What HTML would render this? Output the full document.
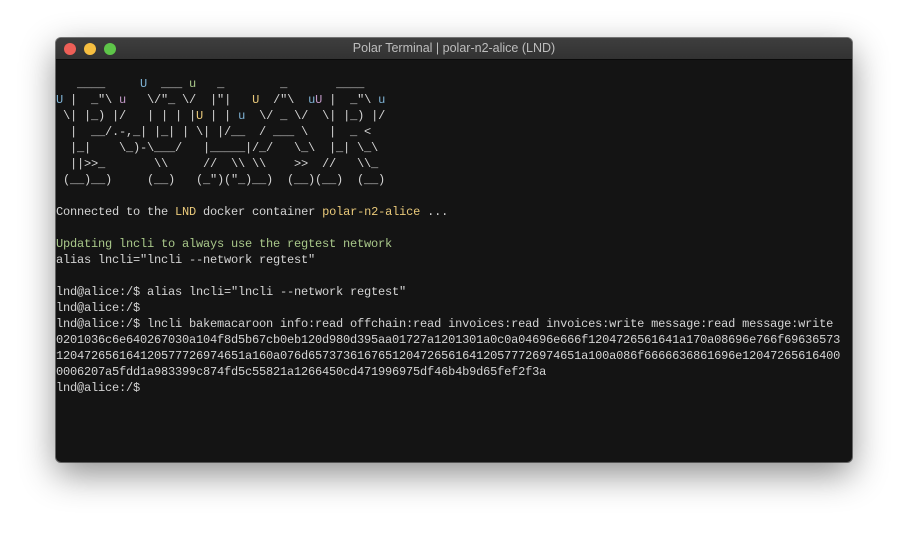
<!DOCTYPE html>
<html><head><meta charset="utf-8"><style>
html,body{margin:0;padding:0;background:#fff;width:908px;height:537px;overflow:hidden}
.win{position:absolute;left:56px;top:38px;width:796px;height:424px;background:#141414;border-radius:5px;box-shadow:0 12px 35px rgba(0,0,0,.45),0 0 0 1px rgba(0,0,0,.5);overflow:hidden}
.tb{height:21px;background:linear-gradient(#3e3e3e,#323232);border-bottom:1px solid #0a0a0a;position:relative;font:12.5px "Liberation Sans",sans-serif;color:#bdbdbd;text-align:center;line-height:21px}
.d{position:absolute;top:5px;width:12px;height:12px;border-radius:50%}
pre{margin:0;position:absolute;left:0;top:38px;font:12px/16px "Liberation Mono",monospace;letter-spacing:-0.2px;color:#d4d4d4;white-space:pre}
.b{color:#7fb3d5}.p{color:#c39ac9}.g{color:#a9c88a}.y{color:#e9c97a}
</style></head><body>
<div class="win">
<div class="tb"><span class="d" style="left:8px;background:#ed5f57"></span><span class="d" style="left:28px;background:#f6be40"></span><span class="d" style="left:48px;background:#5ec549"></span>Polar Terminal | polar-n2-alice (LND)</div>
<pre>   ____     <span class="b">U</span>  ___ <span class="g">u</span>   _        _       ____
<span class="b">U</span> |  _"\ <span class="p">u</span>   \/"_ \/  |"|   <span class="y">U</span>  /"\  <span class="b">u</span><span class="p">U</span> |  _"\ <span class="b">u</span>
 \| |_) |/   | | | |<span class="y">U</span> | | <span class="b">u</span>  \/ _ \/  \| |_) |/
  |  __/.-,_| |_| | \| |/__  / ___ \   |  _ &lt;
  |_|    \_)-\___/   |_____|/_/   \_\  |_| \_\
  ||&gt;&gt;_       \\     //  \\ \\    &gt;&gt;  //   \\_
 (__)__)     (__)   (_")("_)__)  (__)(__)  (__)

Connected to the <span class="y">LND</span> docker container <span class="y">polar-n2-alice</span> ...

<span class="g">Updating lncli to always use the regtest network</span>
alias lncli="lncli --network regtest"

lnd@alice:/$ alias lncli="lncli --network regtest"
lnd@alice:/$
lnd@alice:/$ lncli bakemacaroon info:read offchain:read invoices:read invoices:write message:read message:write
0201036c6e640267030a104f8d5b67cb0eb120d980d395aa01727a1201301a0c0a04696e666f1204726561641a170a08696e766f69636573
120472656164120577726974651a160a076d657373616765120472656164120577726974651a100a086f6666636861696e12047265616400
0006207a5fdd1a983399c874fd5c55821a1266450cd471996975df46b4b9d65fef2f3a
lnd@alice:/$</pre>
</div>
</body></html>
